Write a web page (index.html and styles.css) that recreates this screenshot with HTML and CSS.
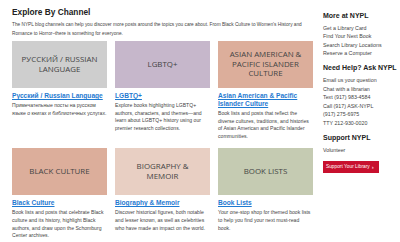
FILE: index.html
```html
<!DOCTYPE html>
<html lang="en">
<head>
<meta charset="utf-8">
<title>Explore By Channel</title>
<link rel="stylesheet" href="styles.css">
</head>
<body>
<div class="page">
  <main class="main">
    <h1 class="title">Explore By Channel</h1>
    <p class="intro">The NYPL blog channels can help you discover more posts around the topics you care about. From Black Culture to Women's History and Romance to Horror–there is something for everyone.</p>
    <div class="grid">
      <div class="card">
        <div class="thumb thumb-gray"><span>РУССКИЙ / RUSSIAN<br>LANGUAGE</span></div>
        <a class="card-title" href="#">Русский / Russian Language</a>
        <p class="card-desc">Примечательные посты на русском языке о книгах и библиотечных услугах.</p>
      </div>
      <div class="card">
        <div class="thumb thumb-lilac"><span>LGBTQ+</span></div>
        <a class="card-title" href="#">LGBTQ+</a>
        <p class="card-desc">Explore books highlighting LGBTQ+ authors, characters, and themes—and learn about LGBTQ+ history using our premier research collections.</p>
      </div>
      <div class="card">
        <div class="thumb thumb-salmon"><span>ASIAN AMERICAN &amp;<br>PACIFIC ISLANDER<br>CULTURE</span></div>
        <a class="card-title" href="#">Asian American &amp; Pacific Islander Culture</a>
        <p class="card-desc">Book lists and posts that reflect the diverse cultures, traditions, and histories of Asian American and Pacific Islander communities.</p>
      </div>
      <div class="card">
        <div class="thumb thumb-salmon"><span>BLACK CULTURE</span></div>
        <a class="card-title" href="#">Black Culture</a>
        <p class="card-desc">Book lists and posts that celebrate Black culture and its history, highlight Black authors, and draw upon the Schomburg Center archives.</p>
      </div>
      <div class="card">
        <div class="thumb thumb-blush"><span>BIOGRAPHY &amp;<br>MEMOIR</span></div>
        <a class="card-title" href="#">Biography &amp; Memoir</a>
        <p class="card-desc">Discover historical figures, both notable and lesser known, as well as celebrities who have made an impact on the world.</p>
      </div>
      <div class="card">
        <div class="thumb thumb-sage"><span>BOOK LISTS</span></div>
        <a class="card-title" href="#">Book Lists</a>
        <p class="card-desc">Your one-stop shop for themed book lists to help you find your next must-read book.</p>
      </div>
    </div>
  </main>
  <aside class="side">
    <section class="side-section">
      <h2 class="side-heading">More at NYPL</h2>
      <ul class="side-list">
        <li>Get a Library Card</li>
        <li>Find Your Next Book</li>
        <li>Search Library Locations</li>
        <li>Reserve a Computer</li>
      </ul>
    </section>
    <section class="side-section">
      <h2 class="side-heading">Need Help? Ask NYPL</h2>
      <ul class="side-list">
        <li>Email us your question</li>
        <li>Chat with a librarian</li>
        <li>Text (917) 983-4584</li>
        <li>Call (917) ASK-NYPL</li>
        <li>(917) 275-6975</li>
        <li>TTY 212-930-0020</li>
      </ul>
    </section>
    <section class="side-section">
      <h2 class="side-heading">Support NYPL</h2>
      <ul class="side-list">
        <li>Volunteer</li>
      </ul>
      <a class="support-btn" href="#">Support Your Library <span class="chev">›</span></a>
    </section>
  </aside>
</div>
</body>
</html>
```

FILE: styles.css
```css
* { box-sizing: border-box; }
html, body { margin: 0; padding: 0; background: #fff; }
body {
  font-family: "Liberation Sans", Arial, sans-serif;
  color: #444;
}
.page {
  display: flex;
  gap: 10px;
  padding: 7px 6px 0 12px;
}
.main { width: 301px; flex: none; }
.title {
  margin: 0;
  font-size: 8.3px;
  line-height: 10px;
  font-weight: bold;
  color: #222;
}
.intro {
  margin: 3px 0 0;
  font-size: 4.75px;
  line-height: 9px;
  color: #444;
}
.grid {
  margin-top: 3px;
  display: grid;
  grid-template-columns: 95px 95px 95px;
  column-gap: 8px;
  row-gap: 8px;
}
.card { display: flex; flex-direction: column; }
.thumb {
  height: 47px;
  display: flex;
  align-items: center;
  justify-content: center;
  text-align: center;
  font-family: "Open Sans", sans-serif;
  font-size: 7.9px;
  line-height: 9.5px;
  color: #444;
}
.thumb-gray { background: #cecece; }
.thumb-lilac { background: #c6b7cb; }
.thumb-salmon { background: #dcae9b; }
.thumb-blush { background: #e8cfc3; }
.thumb-sage { background: #c5cbb2; }
.card-title {
  margin-top: 4px;
  font-size: 6.6px;
  line-height: 8px;
  font-weight: bold;
  color: #1f7ad1;
  text-decoration: underline;
}
.card-desc {
  margin: 2px 0 0;
  font-size: 5.1px;
  line-height: 7.6px;
  color: #444;
}
.side { width: 72px; flex: none; padding-top: 3.5px; }
.side-section { margin-bottom: 5px; }
.side-heading {
  margin: 0 0 4.3px;
  font-size: 7px;
  line-height: 9px;
  font-weight: bold;
  color: #222;
  white-space: nowrap;
}
.side-list {
  list-style: none;
  margin: 0;
  padding: 0;
  font-size: 5.3px;
  line-height: 8.55px;
  color: #444;
  white-space: nowrap;
}
.support-btn {
  display: inline-flex;
  align-items: center;
  gap: 2px;
  margin-top: 2px;
  height: 12px;
  width: 56px;
  padding: 0 3px;
  background: #c8102e;
  color: #fff;
  font-size: 4.8px;
  text-decoration: none;
  white-space: nowrap;
}
.chev { font-size: 6px; line-height: 1; }
```
